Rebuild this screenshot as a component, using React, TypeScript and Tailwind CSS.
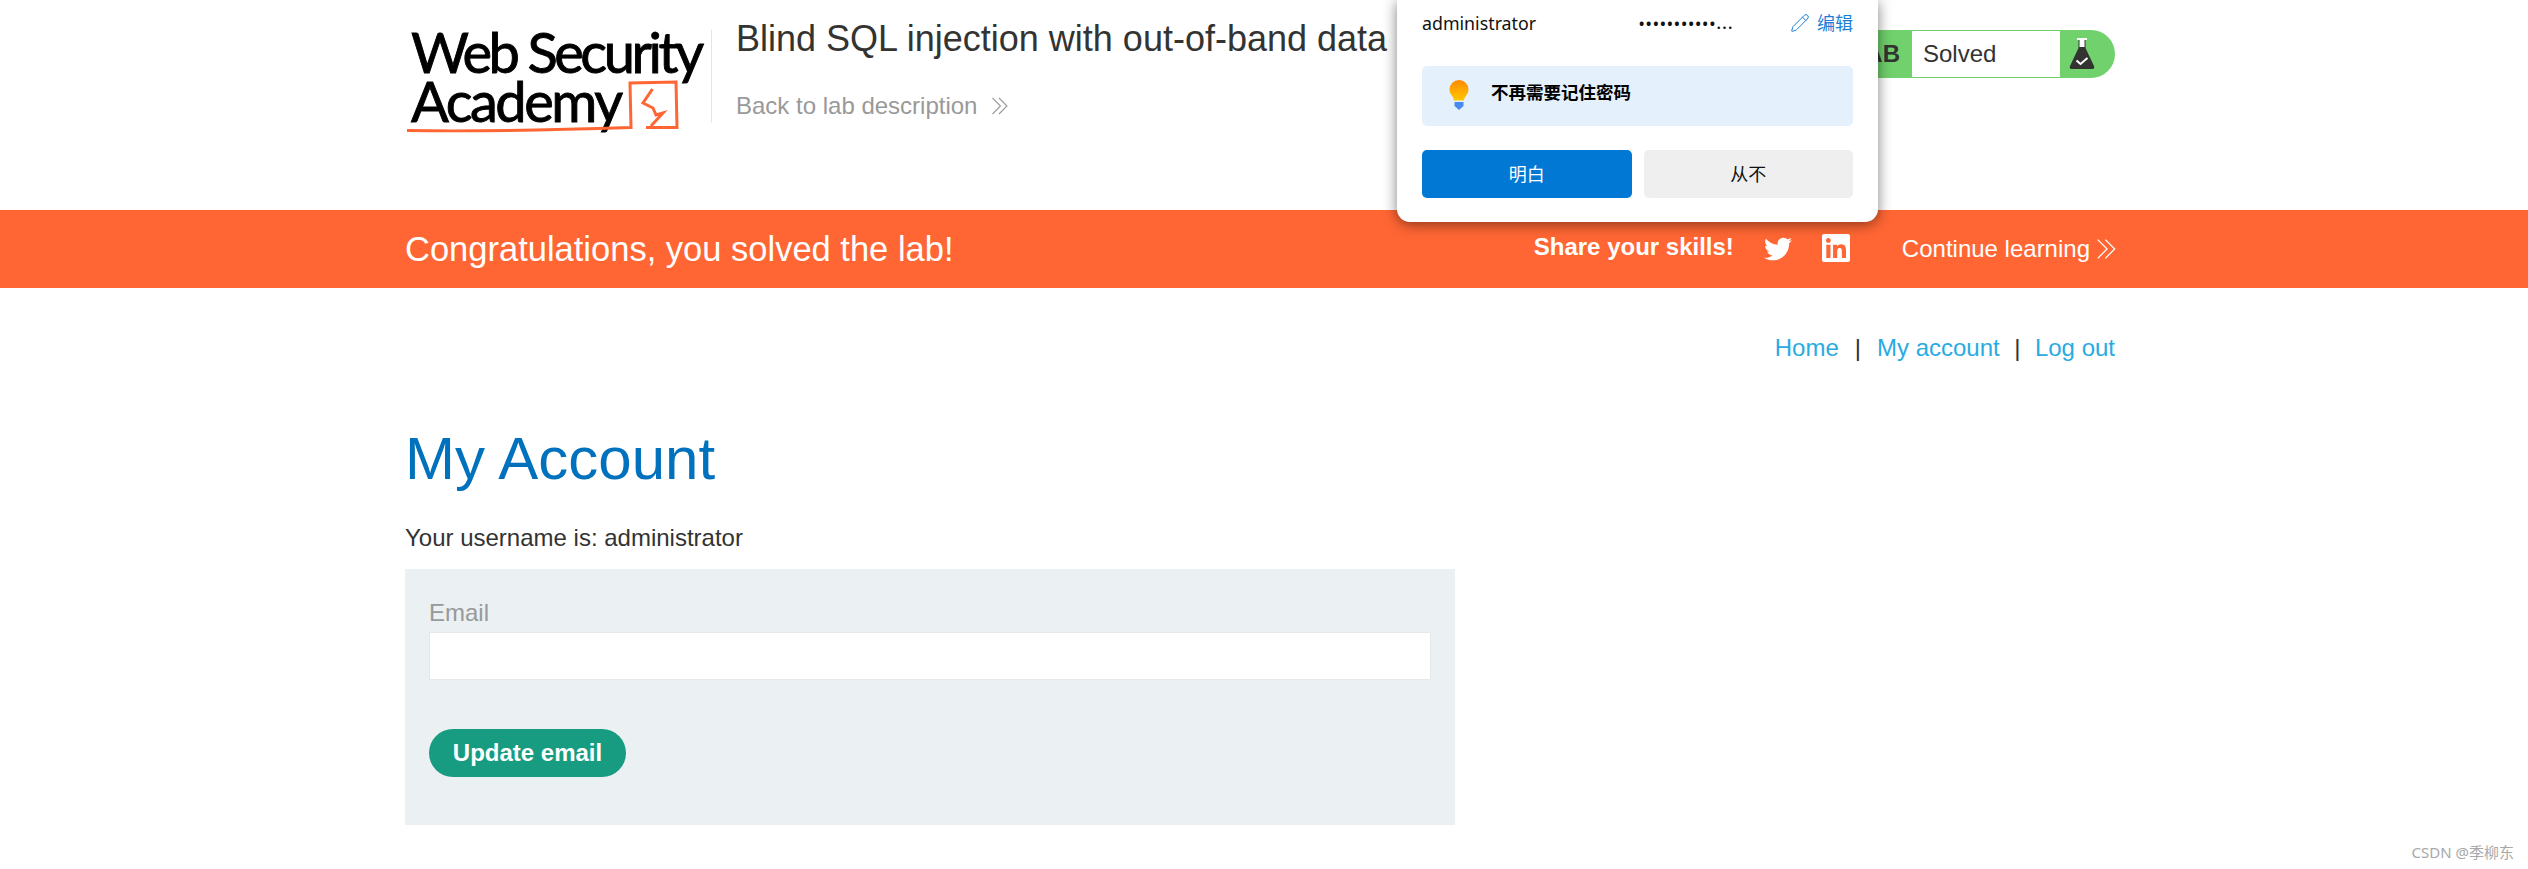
// App.tsx
import { FaTwitter, FaLinkedin } from 'react-icons/fa'
import { Pencil } from 'lucide-react'

const sans = "font-['Liberation_Sans',Arial,sans-serif]"

function Chevrons({ className }: { className?: string }) {
  return (
    <svg viewBox="0 0 18 18" fill="none" stroke="currentColor" strokeWidth="1.1" className={className}>
      <path d="M1.500 1l8 8-8 8" />
      <path d="M8 1l8 8-8 8" />
    </svg>
  )
}

function Logo() {
  return (
    <svg width="300" height="127" viewBox="0 -15 300 127" className="shrink-0 -mt-[15px]">
      <text x="6" y="43" fontFamily="Lato, sans-serif" fontSize="56" stroke="#000" strokeWidth="0.9" textLength="293" lengthAdjust="spacing" fill="#000">Web Security</text>
      <text x="6" y="92" fontFamily="Lato, sans-serif" fontSize="56" stroke="#000" strokeWidth="0.9" textLength="212" lengthAdjust="spacing" fill="#000">Academy</text>
      <path d="M2 100.500 Q90 102 226 97.500 L225 53 L271 52 L272 97.500 L241 97.500" fill="none" stroke="#ff6633" strokeWidth="3" />
      <path d="M247.500 59 L238 73 L248 78 L251 85 L258 83 L246 96" fill="none" stroke="#ff6633" strokeWidth="3" />
    </svg>
  )
}

function Flask() {
  return (
    <svg width="26" height="32" viewBox="0 0 26 32" className="shrink-0">
      <rect x="8" y="0" width="10" height="2" fill="#fff" />
      <path d="M9.500 2h7v8L25 28a2 2 0 0 1-2 3H3a2 2 0 0 1-2-3l8.500-18z" fill="#333332" />
      <path d="M10.500 2h5v7h-5z" fill="#fff" />
      <path d="M7.500 22.500l4 3.500 7-6" fill="none" stroke="#fff" strokeWidth="2" />
    </svg>
  )
}

function Bulb() {
  return (
    <svg width="20" height="30" viewBox="0 0 20 30">
      <defs>
        <linearGradient id="bulbGrad" x1="0" y1="0" x2="0" y2="1">
          <stop offset="0" stopColor="#ff8a00" />
          <stop offset="1" stopColor="#ffc800" />
        </linearGradient>
      </defs>
      <path d="M10 0a9.500 9.500 0 0 1 9.500 9.500c0 5-4 6.500-4.500 11H5C4.500 16 .5 14.500.5 9.500A9.500 9.500 0 0 1 10 0z" fill="url(#bulbGrad)" />
      <path d="M5.500 22h9v4L10 30l-4.500-4z" fill="#4a8af0" />
    </svg>
  )
}

function SavePasswordPopup() {
  return (
    <div className="absolute left-[1397px] top-0 w-[481px] h-[222px] bg-white rounded-b-[13px] shadow-[0_2px_14px_rgba(0,0,0,0.5)] px-[25px] font-['Noto_Sans','Noto_Sans_CJK_SC',sans-serif] text-[#111]">
      <div className="flex items-center h-[46px] text-[17.800px]">
        <span className="w-[217px]">administrator</span>
        <span className="w-[151px] tracking-[1.8px] text-[14px] font-bold">•••••••••••...</span>
        <span className="flex items-center gap-[7px] text-[#1c7fd6]">
          <Pencil size={20} strokeWidth={1.2} />
          <span className="text-[18px]">编辑</span>
        </span>
      </div>
      <div className="mt-[20px] h-[60px] rounded-[5px] bg-[#e4f0fb] flex items-center pl-[27px] pb-[2px]">
        <Bulb />
        <span className="ml-[22px] mb-[6px] text-[17.500px] font-bold text-black">不再需要记住密码</span>
      </div>
      <div className="mt-[24px] flex gap-[12px]">
        <button className="w-[210px] h-[48px] rounded-[5px] bg-[#0078d4] text-white text-[18px]">明白</button>
        <button className="w-[210px] h-[48px] rounded-[5px] bg-[#efefef] text-[#111] text-[18px]">从不</button>
      </div>
    </div>
  )
}

export default function App() {
  return (
    <div className={`relative h-[869px] overflow-hidden bg-white text-[#333332] ${sans}`}>
      {/* lab header */}
      <div className="h-[210px] pl-[405px] w-[2115px] flex items-start">
        <div className="flex items-start pt-[30px] w-full">
          <Logo />
          <div className="ml-[6px] w-px h-[93px] bg-[#e6e6e6]" />
          <div className="ml-[24px] flex-1">
            <h2 className="text-[36px] leading-[40px] -mt-[11px] whitespace-nowrap">Blind SQL injection with out-of-band data</h2>
            <div className="mt-[33px] flex items-center gap-[14px] text-[24px] leading-[28px] text-[#999]">
              Back to lab description
              <Chevrons className="w-[18px] h-[18px] text-[#999]" />
            </div>
          </div>
          <div className="flex items-center h-[48px] rounded-r-[24px] bg-[#70d16d] shrink-0 -ml-[400px]">
            <span className="font-bold text-[24px] pl-[16px] pr-[12px]">LAB</span>
            <span className="w-[148px] h-[46px] bg-white text-[24px] leading-[46px] pl-[11px]">Solved</span>
            <span className="w-[55px] pl-[9px] flex items-center"><Flask /></span>
          </div>
        </div>
      </div>

      {/* solved banner */}
      <div className="h-[78px] bg-[#ff6633] text-white pl-[405px] w-full flex items-center">
        <div className="w-[1710px] flex items-center">
          <span className="text-[34.500px] leading-none">Congratulations, you solved the lab!</span>
          <span className="ml-auto font-bold text-[24px] -mt-[4px]">Share your skills!</span>
          <FaTwitter className="ml-[30px] w-[28px] h-[28px]" />
          <FaLinkedin className="ml-[30px] w-[28px] h-[32px] -mt-[2px]" />
          <span className="ml-[52px] text-[24px]">Continue learning</span>
          <Chevrons className="ml-[6px] -mr-[2px] w-[21px] h-[22px]" />
        </div>
      </div>

      {/* page content */}
      <div className="w-[1710px] ml-[405px]">
        <div className="mt-[46px] flex justify-end items-center text-[24px] leading-[28px] text-[#29abe2]">
          <span>Home</span>
          <span className="mx-[16px] text-[#333332]">|</span>
          <span>My account</span>
          <span className="mx-[14.500px] text-[#333332]">|</span>
          <span>Log out</span>
        </div>
        <h1 className="mt-[62px] text-[60px] leading-[70px] text-[#0071bc]">My Account</h1>
        <p className="mt-[30px] text-[24px] leading-[28px]">Your username is: administrator</p>
        <form className="mt-[17px] w-[1050px] h-[256px] bg-[#ebf0f2] pt-[30px] px-[24px]">
          <label className="block text-[24px] leading-[28px] text-[#999]">Email</label>
          <input className="block mt-[5px] w-[1002px] h-[48px] bg-white border border-[#e8e8e8]" />
          <button type="button" className="mt-[49px] h-[48px] w-[197px] rounded-[24px] bg-[#189c81] text-white font-bold text-[24px]">Update email</button>
        </form>
      </div>

      <SavePasswordPopup />

      <span className="absolute right-[14px] bottom-[6px] text-[15px] text-[#a8a8a8] font-['Noto_Sans','Noto_Sans_CJK_SC',sans-serif]">CSDN @季柳东</span>
    </div>
  )
}
